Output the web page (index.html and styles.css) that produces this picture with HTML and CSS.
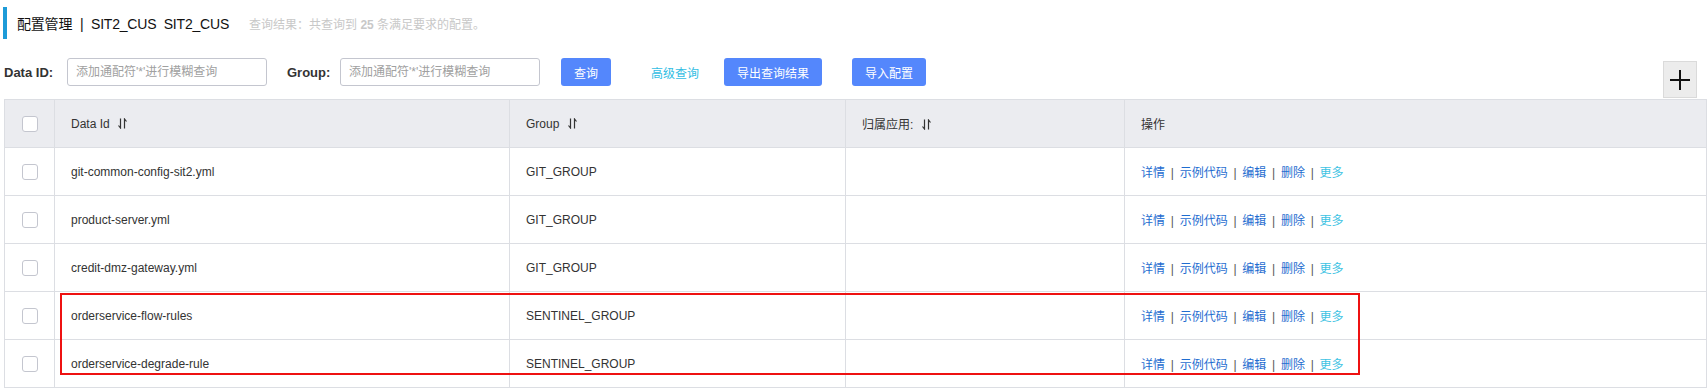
FILE: index.html
```html
<!DOCTYPE html>
<html lang="zh-CN">
<head>
<meta charset="utf-8">
<title>配置管理</title>
<link rel="stylesheet" href="styles.css">
</head>
<body>
<div class="title">
  <span class="title-main">配置管理 <b class="bar">|</b> SIT2_CUS&nbsp; SIT2_CUS</span>
  <span class="title-sub">查询结果：共查询到 <b>25</b> 条满足要求的配置。</span>
</div>

<div class="toolbar">
  <div class="filters">
    <label class="lbl lbl-id">Data ID:</label>
    <input class="inp" type="text" placeholder="添加通配符'*'进行模糊查询">
    <label class="lbl lbl-group">Group:</label>
    <input class="inp" type="text" placeholder="添加通配符'*'进行模糊查询">
    <button class="btn btn-query">查询</button>
    <a class="adv">高级查询</a>
    <button class="btn btn-export">导出查询结果</button>
    <button class="btn btn-import">导入配置</button>
  </div>
  <button class="plus" aria-label="add">
    <svg width="22" height="22" viewBox="0 0 22 22"><path d="M11 1V21M1 11H21" stroke="#111" stroke-width="2"/></svg>
  </button>
</div>

<div class="table-wrap">
  <table class="grid">
    <colgroup>
      <col class="c-chk"><col class="c-id"><col class="c-group"><col class="c-app"><col class="c-ops">
    </colgroup>
    <thead>
      <tr>
        <th class="chk"><span class="box"></span></th>
        <th>Data Id <svg class="sort" width="9" height="11" viewBox="0 0 9 11"><path d="M2.5 0.5V10L0.5 7.5M6.5 10.5V1L8.5 3.5" stroke="#333" stroke-width="1.2" fill="none"/></svg></th>
        <th>Group <svg class="sort" width="9" height="11" viewBox="0 0 9 11"><path d="M2.5 0.5V10L0.5 7.5M6.5 10.5V1L8.5 3.5" stroke="#333" stroke-width="1.2" fill="none"/></svg></th>
        <th>归属应用: <svg class="sort" width="9" height="11" viewBox="0 0 9 11"><path d="M2.5 0.5V10L0.5 7.5M6.5 10.5V1L8.5 3.5" stroke="#333" stroke-width="1.2" fill="none"/></svg></th>
        <th>操作</th>
      </tr>
    </thead>
    <tbody>
      <tr>
        <td class="chk"><span class="box"></span></td>
        <td>git-common-config-sit2.yml</td>
        <td>GIT_GROUP</td>
        <td></td>
        <td class="ops"><a>详情</a><span class="sep">|</span><a>示例代码</a><span class="sep">|</span><a>编辑</a><span class="sep">|</span><a>删除</a><span class="sep">|</span><a class="more">更多</a></td>
      </tr>
      <tr>
        <td class="chk"><span class="box"></span></td>
        <td>product-server.yml</td>
        <td>GIT_GROUP</td>
        <td></td>
        <td class="ops"><a>详情</a><span class="sep">|</span><a>示例代码</a><span class="sep">|</span><a>编辑</a><span class="sep">|</span><a>删除</a><span class="sep">|</span><a class="more">更多</a></td>
      </tr>
      <tr>
        <td class="chk"><span class="box"></span></td>
        <td>credit-dmz-gateway.yml</td>
        <td>GIT_GROUP</td>
        <td></td>
        <td class="ops"><a>详情</a><span class="sep">|</span><a>示例代码</a><span class="sep">|</span><a>编辑</a><span class="sep">|</span><a>删除</a><span class="sep">|</span><a class="more">更多</a></td>
      </tr>
      <tr>
        <td class="chk"><span class="box"></span></td>
        <td>orderservice-flow-rules</td>
        <td>SENTINEL_GROUP</td>
        <td></td>
        <td class="ops"><a>详情</a><span class="sep">|</span><a>示例代码</a><span class="sep">|</span><a>编辑</a><span class="sep">|</span><a>删除</a><span class="sep">|</span><a class="more">更多</a></td>
      </tr>
      <tr>
        <td class="chk"><span class="box"></span></td>
        <td>orderservice-degrade-rule</td>
        <td>SENTINEL_GROUP</td>
        <td></td>
        <td class="ops"><a>详情</a><span class="sep">|</span><a>示例代码</a><span class="sep">|</span><a>编辑</a><span class="sep">|</span><a>删除</a><span class="sep">|</span><a class="more">更多</a></td>
      </tr>
    </tbody>
  </table>
  <div class="highlight"></div>
</div>
</body>
</html>
```

FILE: styles.css
```css
* { box-sizing: border-box; }
body {
  margin: 0;
  padding: 0 0 0 4px;
  background: #fff;
  font-family: "Liberation Sans", "Noto Sans CJK SC", sans-serif;
  font-size: 12px;
  color: #333;
}
.title {
  margin: 7px 0 0 -1px;
  height: 32px;
  border-left: 4px solid #1d9bd8;
  padding-left: 10px;
  display: flex;
  align-items: center;
}
.title-main {
  font-size: 14px;
  color: #111;
  letter-spacing: -0.2px;
}
.title-main .bar {
  margin: 0 4px;
  font-weight: normal;
}
.title-sub {
  margin-left: 20px;
  color: #c8c8c8;
  font-size: 12px;
}
.title-sub b { font-weight: bold; }

.toolbar {
  display: flex;
  align-items: flex-start;
  margin-top: 19px;
  height: 40px;
}
.filters {
  display: flex;
  align-items: center;
  height: 28px;
}
.lbl {
  font-weight: bold;
  font-size: 13px;
  color: #333;
}
.lbl-id { width: 63px; }
.lbl-group { width: 53px; margin-left: 20px; }
.inp {
  width: 200px;
  height: 28px;
  border: 1px solid #c4c6cf;
  border-radius: 3px;
  padding: 0 8px;
  font-family: "Liberation Sans", "Noto Sans CJK SC", sans-serif;
  font-size: 12px;
  outline: none;
}
.inp::placeholder { color: #a0a0a0; }
.btn {
  height: 28px;
  border: none;
  border-radius: 3px;
  background: #5487fc;
  color: #fff;
  font-family: "Liberation Sans", "Noto Sans CJK SC", sans-serif;
  font-size: 12px;
  padding: 0;
}
.btn-query { width: 50px; margin-left: 21px; }
.adv {
  margin-left: 40px;
  color: #32bde3;
  font-size: 12px;
}
.btn-export { width: 98px; margin-left: 25px; }
.btn-import { width: 74px; margin-left: 30px; }
.plus {
  margin-left: auto;
  margin-right: 11px;
  margin-top: 3px;
  width: 34px;
  height: 37px;
  background: #ececec;
  border: 1px solid #dadada;
  padding: 0;
  display: flex;
  align-items: center;
  justify-content: center;
}

.table-wrap {
  position: relative;
  margin-top: 1px;
  width: 1702px;
}
.grid {
  width: 1702px;
  border-collapse: collapse;
  table-layout: fixed;
}
.c-chk { width: 50px; }
.c-id { width: 455px; }
.c-group { width: 336px; }
.c-app { width: 279px; }
.c-ops { width: 582px; }
.grid th, .grid td {
  height: 48px;
  border: 1px solid #dcdee3;
  padding: 0 0 0 16px;
  text-align: left;
  font-weight: normal;
  font-size: 12px;
  color: #333;
  white-space: nowrap;
}
.grid thead th { background: #ebecf0; }
.grid .chk { padding: 0; text-align: center; }
.box {
  display: inline-block;
  width: 16px;
  height: 16px;
  border: 1px solid #c4c6cf;
  border-radius: 3px;
  background: #fff;
  vertical-align: middle;
}
.sort {
  vertical-align: -1px;
  margin-left: 5px;
}
.ops a { color: #1f6dd0; }
.ops a.more { color: #3ec3e3; }
.sep {
  color: #555;
  margin: 0 5.75px;
}
.highlight {
  position: absolute;
  left: 56px;
  top: 194px;
  width: 1300px;
  height: 82px;
  border: 2px solid #ee1111;
  pointer-events: none;
}
```
